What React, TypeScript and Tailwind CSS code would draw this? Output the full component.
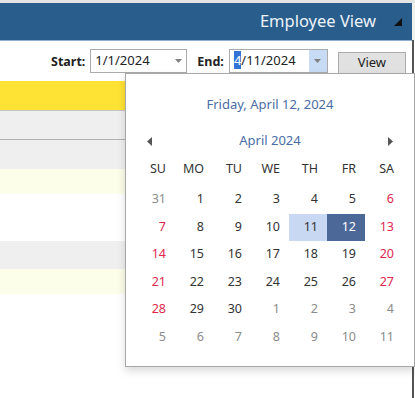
import React from 'react'

const FONT = { fontFamily: '"Noto Sans", "Open Sans", Arial, sans-serif' }

type Cell = { d: number; kind: 'prev' | 'cur' | 'next' }

function buildWeeks(): Cell[][] {
  const cells: Cell[] = [{ d: 31, kind: 'prev' }]
  for (let i = 1; i <= 30; i++) cells.push({ d: i, kind: 'cur' })
  for (let i = 1; i <= 11; i++) cells.push({ d: i, kind: 'next' })
  const weeks: Cell[][] = []
  for (let w = 0; w < 6; w++) weeks.push(cells.slice(w * 7, w * 7 + 7))
  return weeks
}

const DAYS = ['SU', 'MO', 'TU', 'WE', 'TH', 'FR', 'SA']

function DropArrow() {
  return (
    <svg width="7" height="4" viewBox="0 0 7 4">
      <path d="M0 0h7L3.5 4z" fill="#808080" />
    </svg>
  )
}

function Calendar() {
  const weeks = buildWeeks()
  return (
    <div className="absolute left-[125px] top-[73px] w-[290px] h-[294px] bg-white border border-[#a8a8a8] shadow-[0_4px_8px_rgba(0,0,0,0.15)]">
      <div className="mt-[21px] h-[20px] flex items-center justify-center text-[13px] text-[#4a6da5]">
        Friday, April 12, 2024
      </div>
      <div className="mt-[16px] h-[20px] flex items-center justify-between px-[21px] text-[13px] text-[#4a6da5]">
        <svg width="5" height="9" viewBox="0 0 5 9"><path d="M5 0v9L0 4.5z" fill="#555" /></svg>
        <span>April 2024</span>
        <svg width="5" height="9" viewBox="0 0 5 9"><path d="M0 0v9l5-4.5z" fill="#555" /></svg>
      </div>
      <div className="mx-[11px] mt-[8px]">
        <div className="grid grid-cols-7 h-[20px] items-center text-[12.5px] text-[#333]">
          {DAYS.map(d => (
            <div key={d} className="text-right pr-[9px]">{d}</div>
          ))}
        </div>
        <div className="mt-[7px]">
          {weeks.map((week, wi) => (
            <div key={wi} className="grid grid-cols-7 h-[27.5px]">
              {week.map((c, ci) => {
                const selected = c.kind === 'cur' && c.d === 12
                const today = c.kind === 'cur' && c.d === 11
                const weekend = ci === 0 || ci === 6
                let color = 'text-[#333]'
                if (c.kind !== 'cur') color = 'text-[#8c8c8c]'
                else if (weekend) color = 'text-[#e0284f]'
                if (selected) color = 'text-white'
                return (
                  <div
                    key={ci}
                    className={`flex items-center justify-end pr-[9px] text-[12.5px] ${color} ${
                      selected ? 'bg-[#4b6899]' : today ? 'bg-[#c9d8f2]' : ''
                    }`}
                  >
                    {c.d}
                  </div>
                )
              })}
            </div>
          ))}
        </div>
      </div>
    </div>
  )
}

export default function App() {
  return (
    <div className="relative w-[415px] h-[398px] bg-white overflow-hidden flex flex-col" style={FONT}>
      <div className="h-[3px] bg-[#e4e4e4]" />
      <div className="flex h-[37px]">
        <div className="flex-1 bg-[#285d8c] flex items-center justify-end pr-[10px]">
          <span className="text-[16.5px] text-[#eef3f8] mr-[18px]">Employee View</span>
          <svg width="8" height="8" viewBox="0 0 8 8"><path d="M8 0v8H0z" fill="#111" /></svg>
        </div>
        <div className="w-[3px] bg-[#f0f0f0]" />
      </div>
      <div className="flex flex-1">
        <div className="flex-1 flex flex-col">
          <div className="h-px bg-[#8fb0cf]" />
          <div className="h-[40px] flex items-start pt-[8px] text-[13px] text-[#222]">
            <span className="ml-[51px] mt-[4px] font-bold text-[12.5px]">Start:</span>
            <div className="ml-[5px] w-[97px] h-[24px] border border-[#ababab] flex items-center justify-between pl-[4px] pr-[4px]">
              <span>1/1/2024</span>
              <DropArrow />
            </div>
            <span className="ml-[10px] mt-[4px] font-bold text-[12.5px]">End:</span>
            <div className="ml-[5px] w-[99px] h-[24px] border border-[#ababab] flex items-center">
              <span className="pl-[4px] flex-1">
                <span className="bg-[#3373d6] text-white">4</span>/11/2024
              </span>
              <div className="w-[18px] h-full bg-[#c8dbf5] flex items-center justify-center">
                <DropArrow />
              </div>
            </div>
            <div className="ml-[10px] mt-[3px] w-[68px] h-[22px] bg-[#e1e1e1] border border-[#adadad] flex items-center justify-center">
              View
            </div>
          </div>
          <div className="h-[30px] bg-[#ffe334] border-b border-[#c4c4c4]" />
          <div className="h-[29px] bg-[#efefef] border-b border-[#b0b0b0]" />
          <div className="h-[29px] bg-[#efefef]" />
          <div className="h-[25px] bg-[#fdfee9]" />
          <div className="h-[47px] bg-white" />
          <div className="h-[28px] bg-[#efefef]" />
          <div className="h-[25px] bg-[#fdfee9]" />
        </div>
        <div className="w-[2px] bg-[#555]" />
        <div className="w-px bg-white" />
      </div>
      <Calendar />
    </div>
  )
}
